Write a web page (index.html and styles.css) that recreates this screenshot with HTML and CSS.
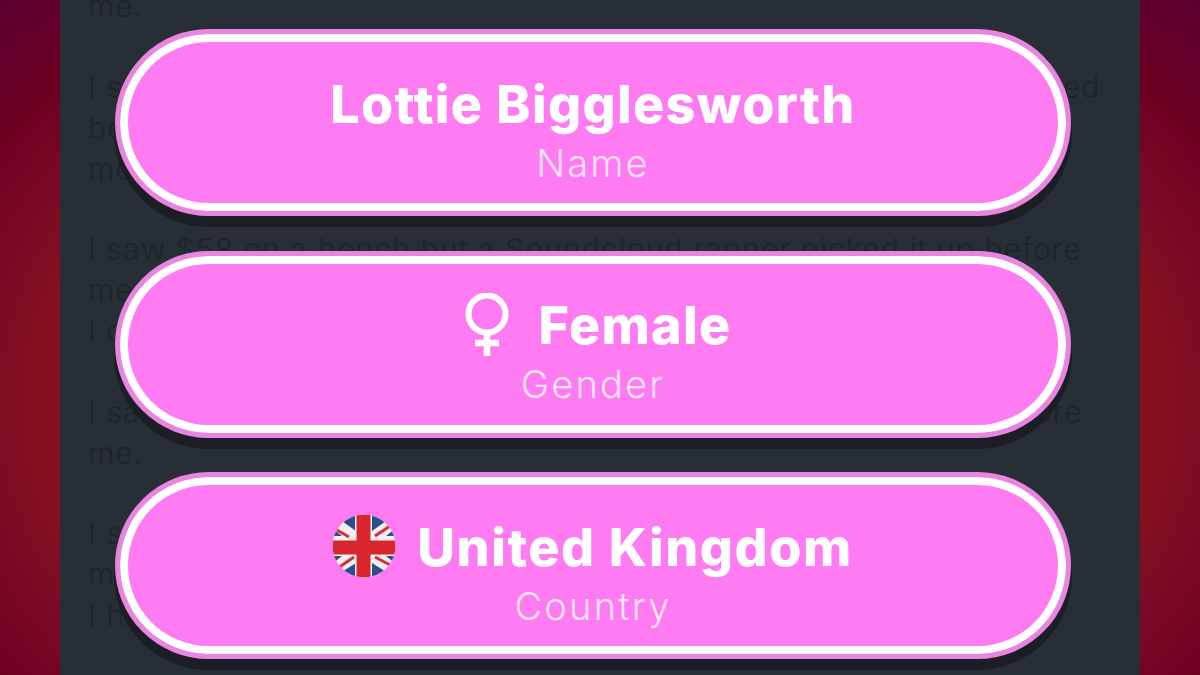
FILE: index.html
```html
<!DOCTYPE html>
<html>
<head lang="en">
    <meta charset="UTF-8">
    <title>Character</title>
    <link rel="stylesheet" href="styles.css">
</head>
<body>
<div class="panel">
    <div class="log">
        <p>me.</p>
        <p>I saw $14 on the ground, but a Soundcloud rapper had just grabbed<br>before I could get there and ran away laughing at<br>me.</p>
        <p>I saw $58 on a bench but a Soundcloud rapper picked it up before<br>me.<br>I could not believe how unlucky I was today.</p>
        <p>I saw $22 on a bench but a Soundcloud rapper picked it up before<br>me.</p>
        <p>I saw $37 on a table but a Soundcloud rapper picked it up before<br>me and left.<br>I had no luck.</p>
    </div>
    <div class="choices">
        <div class="choice">
            <div class="choice-value">Lottie Bigglesworth</div>
            <div class="choice-label">Name</div>
        </div>
        <div class="choice">
            <div class="choice-value choice-gender">
                <svg class="icon-female" width="46" height="66" viewBox="0 0 46 66">
                    <circle cx="23" cy="21" r="18.5" fill="none" stroke="#fff" stroke-width="6"/>
                    <path d="M23 39V63M11 50H35" fill="none" stroke="#fff" stroke-width="6.5"/>
                </svg>
                <span>Female</span>
            </div>
            <div class="choice-label">Gender</div>
        </div>
        <div class="choice">
            <div class="choice-value choice-country">
                <svg class="icon-flag" width="64" height="64" viewBox="0 0 64 64">
                    <defs><clipPath id="round"><circle cx="32" cy="32" r="31.5"/></clipPath></defs>
                    <g clip-path="url(#round)">
                        <rect width="64" height="64" fill="#f3eef0"/>
                        <path d="M24 17V0H0ZM40 17V0H64ZM24 49V64H0ZM40 49V64H64ZM0 14L10 22H0ZM64 14L54 22H64ZM0 50L10 42H0ZM64 50L54 42H64Z" fill="#2a4f8c"/>
                        <path d="M5 16L17 23M43 22L58 12M6 54L22 43M43 43L60 52" stroke="#d22f3a" stroke-width="3"/>
                        <path d="M31.5 0V64M0 33.5H64" stroke="#f3eef0" stroke-width="17"/>
                        <path d="M31.5 0V64M0 33.5H64" stroke="#d9262e" stroke-width="14"/>
                    </g>
                </svg>
                <span>United Kingdom</span>
            </div>
            <div class="choice-label">Country</div>
        </div>
    </div>
</div>
</body>
</html>
```
FILE: styles.css
```css
html, body {
    margin: 0;
    height: 100%;
    overflow: hidden;
}
body {
    background: radial-gradient(ellipse 800px 560px at 50% 60%, #86101f 70%, #7c0a24 77%, #6c0022 89%, #5c0030 104%);
    font-family: "Inter", "Liberation Sans", sans-serif;
}
.panel {
    position: relative;
    width: 1080px;
    height: 675px;
    margin: 0 auto;
    background: #272e35;
    overflow: hidden;
}
.log {
    margin-top: -14px;
    padding: 0 28px;
    font-size: 30px;
    font-weight: 300;
    letter-spacing: 1.1px;
    line-height: 41px;
    color: #1e242a;
    white-space: nowrap;
}
.log p {
    margin: 0 0 39.5px 0;
}
.choices {
    position: absolute;
    top: 29px;
    left: 55px;
    width: 956px;
    display: flex;
    flex-direction: column;
    gap: 34.5px;
}
.choice {
    box-sizing: border-box;
    height: 187px;
    border: 5px solid #e985e1;
    border-radius: 94px;
    background: #ff7bf2;
    box-shadow: inset 0 0 0 8px #fff, 0 10px 0 1px #1b1f25;
    display: flex;
    flex-direction: column;
    align-items: center;
    justify-content: center;
    color: #fff;
}
.choice-value {
    display: flex;
    align-items: center;
    height: 60px;
    margin-top: 17px;
    font-size: 52px;
    font-weight: 800;
    letter-spacing: 1.3px;
    line-height: 60px;
}
.choice-label {
    margin-top: 3px;
    font-size: 38px;
    font-weight: 300;
    letter-spacing: 2.2px;
    line-height: 50px;
    color: #ffe2fb;
}
.choice-gender {
    gap: 29px;
    margin-left: 9px;
}
.choice-country {
    gap: 21px;
    letter-spacing: 1.55px;
}
.icon-female {
    flex: none;
}
.icon-flag {
    flex: none;
    margin: -4px 0 0 -1px;
}
```
